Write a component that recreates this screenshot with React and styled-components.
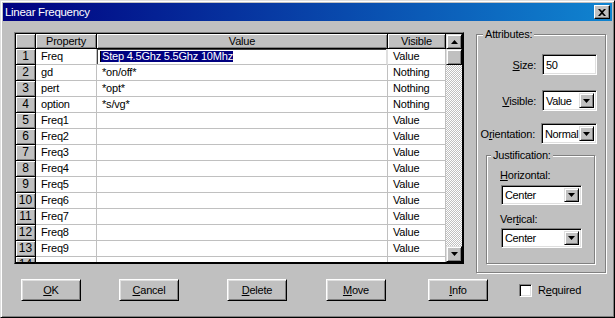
import React from 'react';
import styled, { createGlobalStyle } from 'styled-components';

const FONT = `"Liberation Sans", Arial, sans-serif`;

const GlobalStyle = createGlobalStyle`
  html, body { margin: 0; padding: 0; background: #c0c0c0; }
  body { font-family: ${FONT}; font-size: 11px; letter-spacing: -0.2px; color: #000; }
  * { box-sizing: border-box; }
`;

const Window = styled.div`
  width: 615px;
  height: 318px;
  background: #c0c0c0;
  border: 1px solid;
  border-color: #dfdfdf #000 #000 #dfdfdf;
  box-shadow: inset 1px 1px #fff, inset -1px -1px #808080;
  padding: 2px;
  display: flex;
  flex-direction: column;
  overflow: hidden;
`;

const TitleBar = styled.div`
  height: 18px;
  flex: none;
  display: flex;
  align-items: center;
  padding: 0 2px 0 2px;
  background: linear-gradient(to right, #000080, #1084d0);
  color: #fff;
  font-size: 11.5px;
  letter-spacing: -0.3px;
`;

const TitleText = styled.span`
  flex: 1;
  line-height: 18px;
`;

const CloseButton = styled.div`
  width: 16px;
  height: 14px;
  background: #c0c0c0;
  border: 1px solid;
  border-color: #fff #000 #000 #fff;
  box-shadow: inset -1px -1px #808080;
  display: flex;
  align-items: center;
  justify-content: center;
`;

const Body = styled.div`
  flex: 1;
  padding: 0 0 0 11px;
  display: flex;
  flex-direction: column;
`;

const TopRow = styled.div`
  display: flex;
  align-items: flex-start;
`;

const GridFrame = styled.div`
  margin-top: 11px;
  width: 450px;
  height: 232px;
  border: 1px solid;
  border-color: #808080 #000 #000 #808080;
  box-shadow: inset 1px 1px #000, inset -1px -1px #000;
  padding: 1px;
  display: flex;
  background: #000;
`;

const Table = styled.div`
  width: 430px;
  height: 228px;
  overflow: hidden;
  display: grid;
  grid-template-columns: 20px 61px 291px 58px;
  grid-template-rows: 15px;
  grid-auto-rows: 16px;
  background: #fff;
`;

const HeaderCell = styled.div`
  background: #c0c0c0;
  border-right: 1px solid #000;
  border-bottom: 1px solid #000;
  box-shadow: inset 1px 1px #fff, inset -1px -1px #808080;
  text-align: center;
  line-height: 14px;
  white-space: nowrap;
  overflow: hidden;
`;

const RowHeader = styled(HeaderCell)`
  font-size: 12px;
  letter-spacing: 0;
  line-height: 15px;
`;

const Cell = styled.div`
  background: #fff;
  border-right: 1px solid #c0c0c0;
  border-bottom: 1px solid #c0c0c0;
  padding-left: 5px;
  line-height: 15px;
  white-space: nowrap;
  overflow: hidden;
`;

const EditCell = styled.div`
  background: #fff;
  border-right: 2px solid #dfdfdf;
  border-bottom: 1px solid #c0c0c0;
  box-shadow: inset 1px 1px #404040;
  padding-left: 3px;
  display: flex;
  align-items: center;
  white-space: nowrap;
  overflow: hidden;
`;

const Caret = styled.span`
  width: 1px;
  height: 11px;
  background: #000;
`;

const Selected = styled.span`
  background: #000080;
  color: #fff;
  line-height: 11px;
  height: 11px;
  padding-left: 1px;
`;

const Scrollbar = styled.div`
  width: 16px;
  height: 228px;
  display: flex;
  flex-direction: column;
  background: #000;
`;

const ScrollButton = styled.div`
  width: 16px;
  height: ${(p) => p.$h ?? 16}px;
  flex: none;
  background: #c0c0c0;
  border: 1px solid;
  border-color: #dfdfdf #000 #000 #dfdfdf;
  box-shadow: inset 1px 1px #fff, inset -1px -1px #808080;
  display: flex;
  align-items: center;
  justify-content: center;
`;

const Track = styled.div`
  flex: 1;
  background-color: #c0c0c0;
  background-image: conic-gradient(#fff 25%, #c0c0c0 0 50%, #fff 0 75%, #c0c0c0 0);
  background-size: 2px 2px;
`;

const Group = styled.fieldset`
  margin: ${(p) => p.$mt}px 0 0 ${(p) => p.$ml}px;
  padding: 0;
  min-width: 0;
  width: ${(p) => p.$w}px;
  height: ${(p) => p.$h}px;
  border: 1px solid #808080;
  box-shadow: inset 1px 1px #fff, 1px 1px #fff;
`;

const Legend = styled.legend`
  margin-left: ${(p) => p.$ml ?? 6}px;
  padding: 0 2px;
  line-height: 14px;
  background: #c0c0c0;
`;

const AttrRow = styled.div`
  display: flex;
  align-items: center;
  justify-content: flex-end;
  gap: 6px;
  padding-right: 8px;
  margin-top: ${(p) => p.$mt}px;
`;

const Label = styled.span`
  line-height: 14px;
  white-space: nowrap;
`;

const StackLabel = styled.div`
  line-height: 14px;
  margin: ${(p) => p.$mt}px 0 0 13px;
`;

const Sunken = styled.div`
  width: ${(p) => p.$w}px;
  height: ${(p) => p.$h ?? 21}px;
  background: #fff;
  border: 1px solid;
  border-color: #808080 #fff #fff #808080;
  box-shadow: inset 1px 1px #000, inset -1px -1px #dfdfdf;
  padding: 2px 2px 2px 1px;
  display: flex;
  align-items: center;
  margin-left: ${(p) => p.$ml ?? 0}px;
  margin-top: ${(p) => p.$mt ?? 0}px;
`;

const FieldText = styled.span`
  flex: 1;
  min-width: 0;
  padding-left: 2px;
  letter-spacing: -0.35px;
  white-space: nowrap;
  overflow: visible;
  line-height: 14px;
`;

const DropButton = styled.div`
  width: 15px;
  height: 100%;
  flex: none;
  background: #c0c0c0;
  border: 1px solid;
  border-color: #dfdfdf #000 #000 #dfdfdf;
  box-shadow: inset 1px 1px #fff, inset -1px -1px #808080;
  display: flex;
  align-items: center;
  justify-content: center;
`;

const ButtonRow = styled.div`
  display: flex;
  align-items: center;
  margin-top: 6px;
`;

const Button = styled.div`
  width: 60px;
  height: 22px;
  margin-left: ${(p) => p.$ml}px;
  background: #c0c0c0;
  border: 1px solid;
  border-color: #fff #000 #000 #fff;
  box-shadow: inset 1px 1px #dfdfdf, inset -1px -1px #808080;
  display: flex;
  align-items: center;
  justify-content: center;
  line-height: 14px;
`;

const CheckBox = styled.div`
  width: 13px;
  height: 13px;
  margin-left: 31px;
  background: #fff;
  border: 1px solid;
  border-color: #808080 #fff #fff #808080;
  box-shadow: inset 1px 1px #000, inset -1px -1px #dfdfdf;
`;

const CheckLabel = styled.span`
  margin-left: 6px;
  line-height: 14px;
`;

const Arrow = ({ up }) => (
  <svg width="7" height="4" viewBox="0 0 7 4">
    <path d={up ? 'M3.5 0 L7 4 L0 4 Z' : 'M0 0 L7 0 L3.5 4 Z'} fill="#000" />
  </svg>
);

const CloseIcon = () => (
  <svg width="8" height="7" viewBox="0 0 8 7">
    <path d="M0 0h2l2 2 2-2h2L5 3.5 8 7H6L4 5 2 7H0l3-3.5z" fill="#000" />
  </svg>
);

const rows = [
  ['Freq', 'Step 4.5Ghz 5.5Ghz 10Mhz', 'Value', true],
  ['gd', '*on/off*', 'Nothing'],
  ['pert', '*opt*', 'Nothing'],
  ['option', '*s/vg*', 'Nothing'],
  ['Freq1', '', 'Value'],
  ['Freq2', '', 'Value'],
  ['Freq3', '', 'Value'],
  ['Freq4', '', 'Value'],
  ['Freq5', '', 'Value'],
  ['Freq6', '', 'Value'],
  ['Freq7', '', 'Value'],
  ['Freq8', '', 'Value'],
  ['Freq9', '', 'Value'],
  ['', '', ''],
];

const Combo = ({ value, w, h, ml, mt }) => (
  <Sunken $w={w} $h={h} $ml={ml} $mt={mt}>
    <FieldText>{value}</FieldText>
    <DropButton>
      <Arrow />
    </DropButton>
  </Sunken>
);

export default function App() {
  return (
    <>
      <GlobalStyle />
      <Window>
        <TitleBar>
          <TitleText>Linear Frequency</TitleText>
          <CloseButton>
            <CloseIcon />
          </CloseButton>
        </TitleBar>
        <Body>
          <TopRow>
            <GridFrame>
              <Table>
                <HeaderCell />
                <HeaderCell>Property</HeaderCell>
                <HeaderCell>Value</HeaderCell>
                <HeaderCell>Visible</HeaderCell>
                {rows.map(([prop, val, vis, editing], i) => (
                  <React.Fragment key={i}>
                    <RowHeader>{i + 1}</RowHeader>
                    <Cell>{prop}</Cell>
                    {editing ? (
                      <EditCell>
                        <Caret />
                        <Selected>{val}</Selected>
                      </EditCell>
                    ) : (
                      <Cell>{val}</Cell>
                    )}
                    <Cell>{vis}</Cell>
                  </React.Fragment>
                ))}
              </Table>
              <Scrollbar>
                <ScrollButton $h={15}>
                  <Arrow up />
                </ScrollButton>
                <ScrollButton />
                <Track />
                <ScrollButton>
                  <Arrow />
                </ScrollButton>
              </Scrollbar>
            </GridFrame>
            <Group $mt={6} $ml={12} $w={130} $h={246}>
              <Legend $ml={6}>Attributes:</Legend>
              <AttrRow $mt={13}>
                <Label>
                  <u>S</u>ize:
                </Label>
                <Sunken $w={55}>
                  <FieldText>50</FieldText>
                </Sunken>
              </AttrRow>
              <AttrRow $mt={15}>
                <Label>
                  <u>V</u>isible:
                </Label>
                <Combo value="Value" w={55} />
              </AttrRow>
              <AttrRow $mt={12}>
                <Label>
                  O<u>r</u>ientation:
                </Label>
                <Combo value="Normal" w={56} />
              </AttrRow>
              <Group $mt={4} $ml={9} $w={109} $h={116}>
                <Legend $ml={4}>Justification:</Legend>
                <StackLabel $mt={6}>
                  <u>H</u>orizontal:
                </StackLabel>
                <Combo value="Center" w={81} h={20} ml={14} mt={3} />
                <StackLabel $mt={7}>
                  Ver<u>t</u>ical:
                </StackLabel>
                <Combo value="Center" w={81} h={20} ml={14} mt={2} />
              </Group>
            </Group>
          </TopRow>
          <ButtonRow>
            <Button $ml={7}>
              <span><u>O</u>K</span>
            </Button>
            <Button $ml={38}>
              <span><u>C</u>ancel</span>
            </Button>
            <Button $ml={48}>
              <span><u>D</u>elete</span>
            </Button>
            <Button $ml={39}>
              <span><u>M</u>ove</span>
            </Button>
            <Button $ml={42}>
              <span><u>I</u>nfo</span>
            </Button>
            <CheckBox />
            <CheckLabel>
              R<u>e</u>quired
            </CheckLabel>
          </ButtonRow>
        </Body>
      </Window>
    </>
  );
}
